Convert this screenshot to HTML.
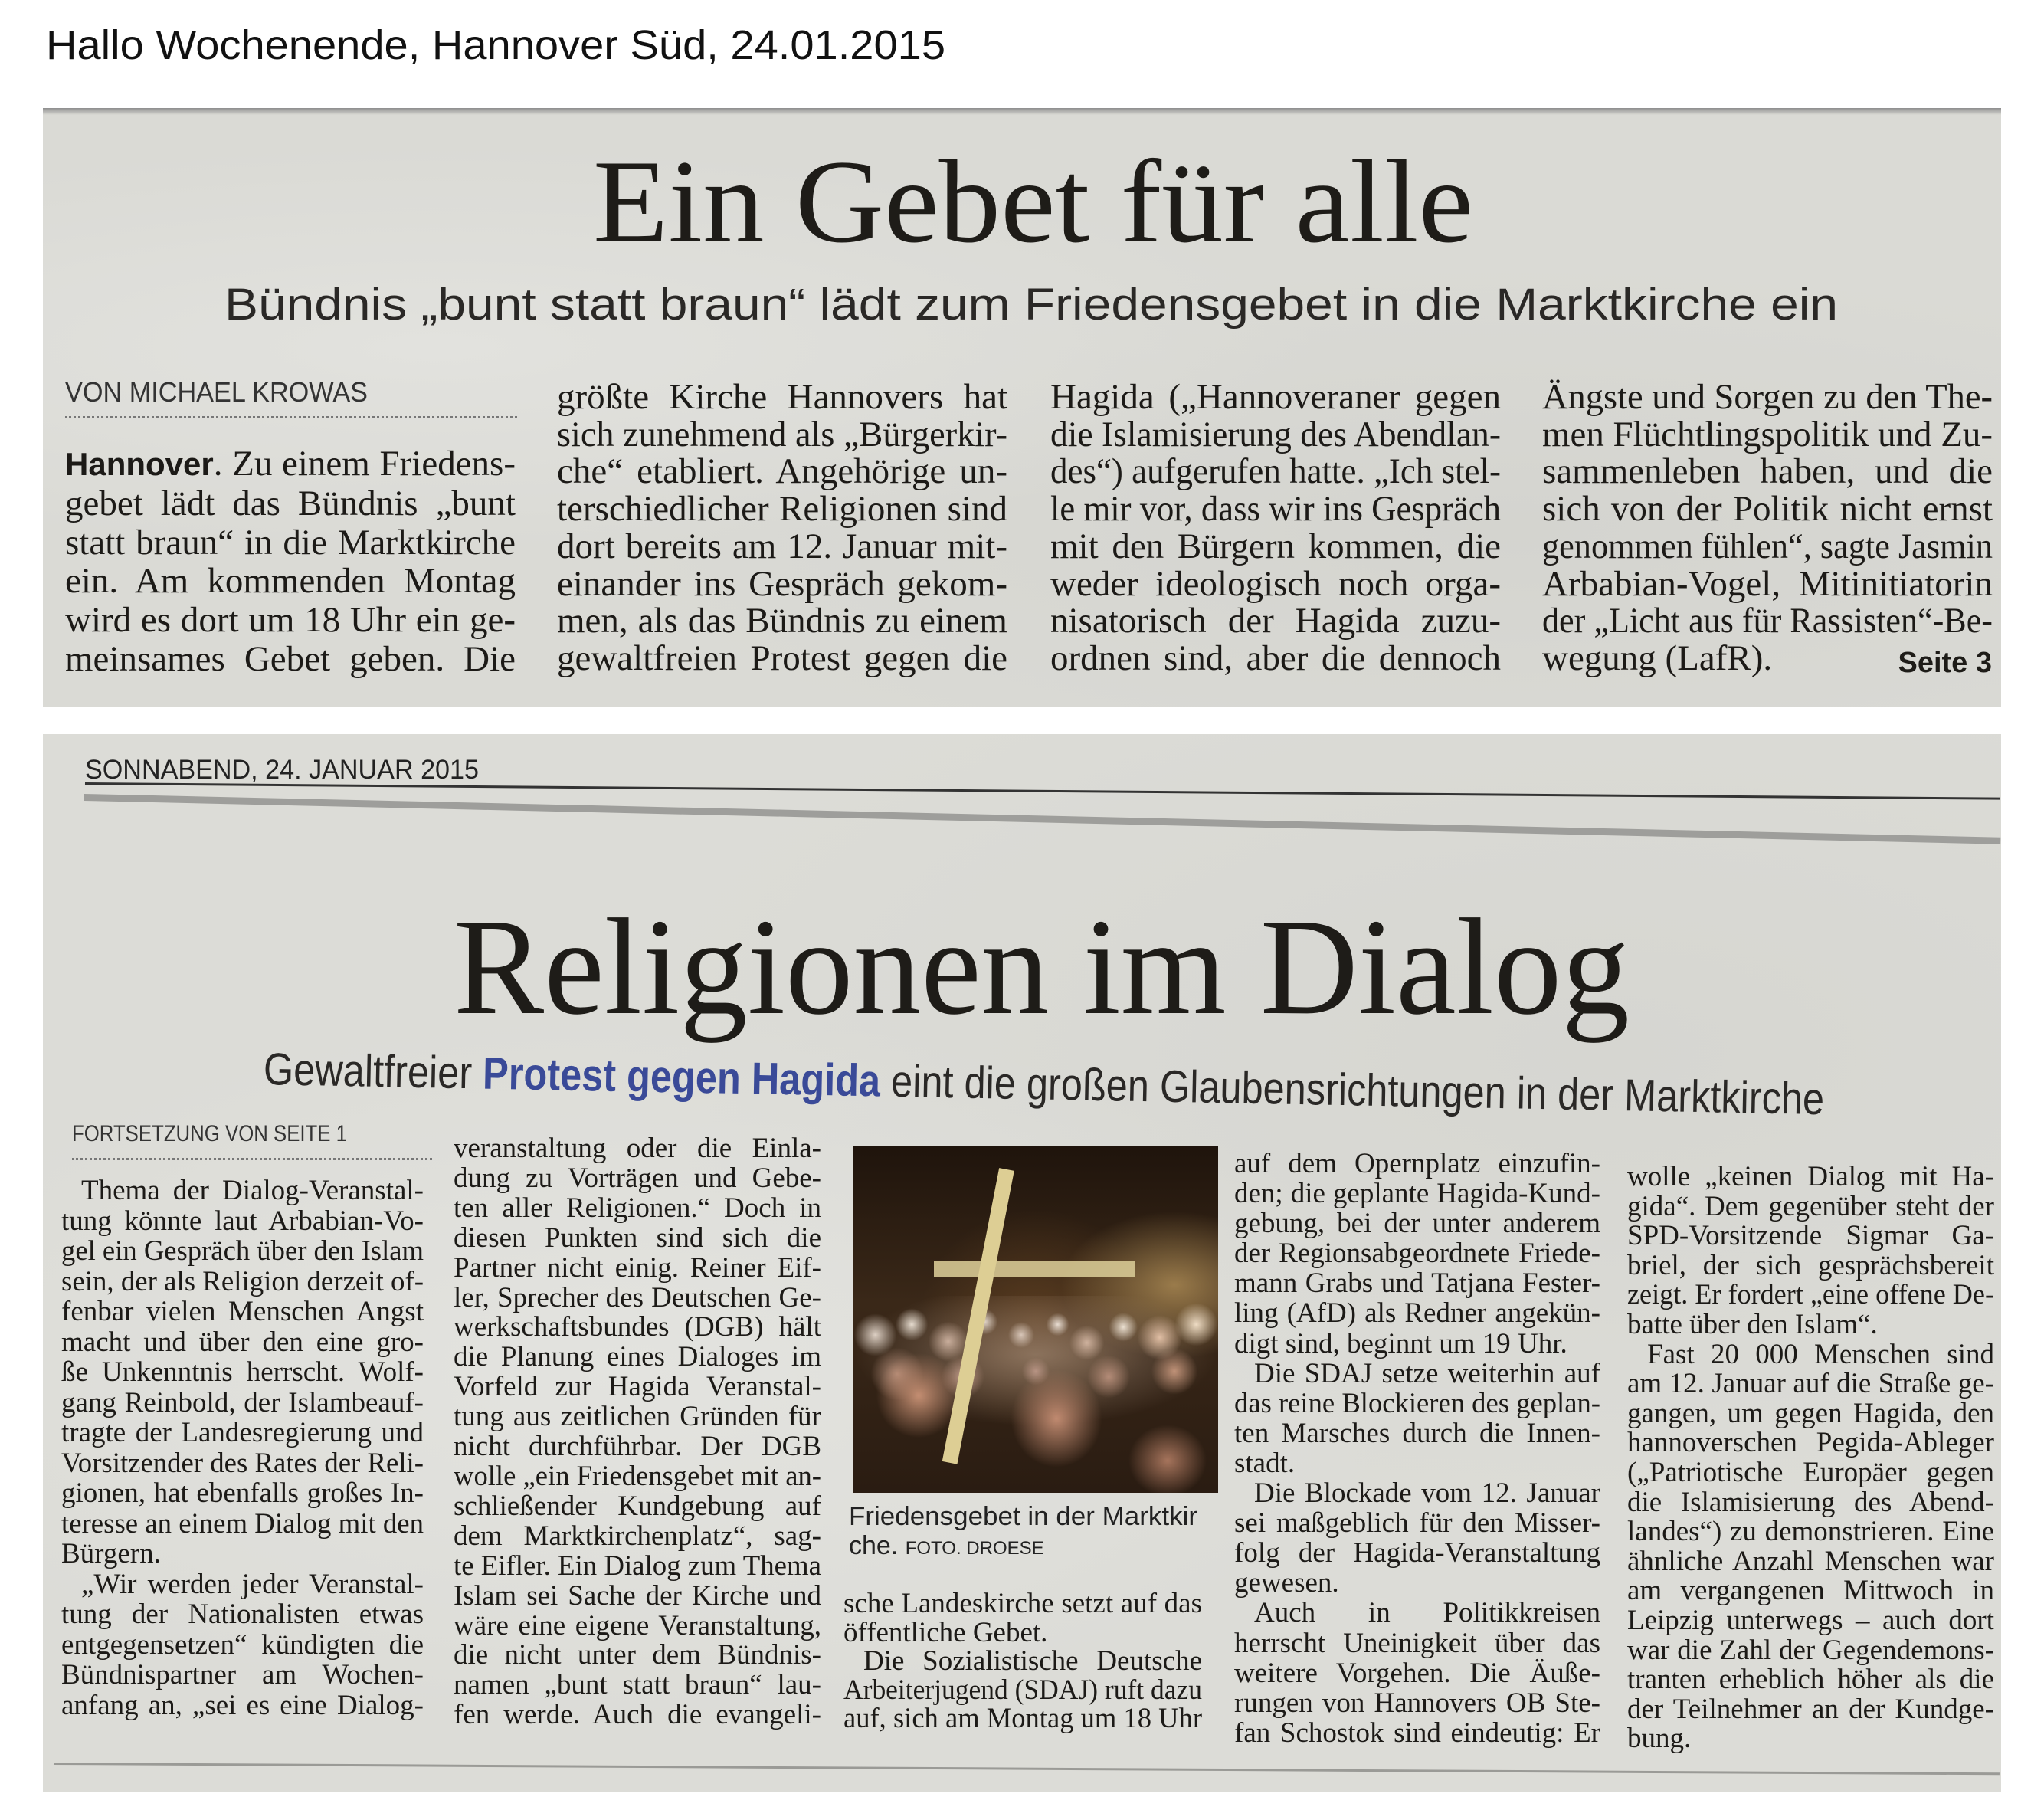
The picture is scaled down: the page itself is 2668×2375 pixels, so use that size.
<!DOCTYPE html>
<html><head><meta charset="utf-8">
<style>
html,body{margin:0;padding:0;background:#fff;}
body{width:2668px;height:2375px;position:relative;overflow:hidden;}
.a{position:absolute;}
.sans{font-family:"Liberation Sans",sans-serif;}
.serif{font-family:"Liberation Serif",serif;}
.fit{position:absolute;white-space:nowrap;}
.fit>span{display:inline-block;transform-origin:0 0;}
.c{position:absolute;font-family:"Liberation Serif",serif;color:#1c1a17;}
.c>div{white-space:nowrap;text-align:justify;text-align-last:justify;overflow:visible;transform-origin:0 0;}
.c>div.e{text-align-last:left;}
.c>div.i{text-indent:26px;}
.p1{font-size:47px;}
.p2{font-size:37px;}
</style></head><body>

<div class="fit sans" style="left:60px;top:32px;width:1174px;font-size:54px;line-height:54px;color:#111;"><span>Hallo Wochenende, Hannover Süd, 24.01.2015</span></div>

<!-- Panel 1 -->
<div class="a" style="left:56px;top:141px;width:2556px;height:781px;background:#dadad5;background-image:radial-gradient(ellipse at 20% 40%,#e2e2de 0,transparent 40%),radial-gradient(ellipse at 75% 70%,#d4d4cf 0,transparent 45%);"></div>
<div class="a" style="left:56px;top:141px;width:2556px;height:9px;background:linear-gradient(#8e8e8e,#dadad5);"></div>

<div class="fit serif" style="left:774px;top:186px;width:1149px;font-size:155px;line-height:155px;color:#1e1c18;"><span>Ein Gebet für alle</span></div>
<div class="fit sans" style="left:293px;top:369px;width:2106px;font-size:58px;line-height:58px;color:#2a2826;"><span>Bündnis „bunt statt braun“ lädt zum Friedensgebet in die Marktkirche ein</span></div>

<div class="fit sans" style="left:85px;top:494px;width:395px;font-size:36px;line-height:36px;color:#333;"><span>VON MICHAEL KROWAS</span></div>
<div class="a" style="left:85px;top:543px;width:590px;border-top:3px dotted #777;"></div>

<div class="c p1" style="left:85px;top:580px;width:588px;line-height:50.8px;">
<div><b class="sans" style="font-size:42px;">Hannover</b>. Zu einem Friedens-</div>
<div>gebet lädt das Bündnis „bunt</div>
<div>statt braun“ in die Marktkirche</div>
<div>ein. Am kommenden Montag</div>
<div>wird es dort um 18 Uhr ein ge-</div>
<div>meinsames Gebet geben. Die</div>
</div>
<div class="c p1" style="left:727px;top:494px;width:588px;line-height:48.7px;">
<div>größte Kirche Hannovers hat</div>
<div>sich zunehmend als „Bürgerkir-</div>
<div>che“ etabliert. Angehörige un-</div>
<div>terschiedlicher Religionen sind</div>
<div>dort bereits am 12. Januar mit-</div>
<div>einander ins Gespräch gekom-</div>
<div>men, als das Bündnis zu einem</div>
<div>gewaltfreien Protest gegen die</div>
</div>
<div class="c p1" style="left:1371px;top:494px;width:588px;line-height:48.7px;">
<div>Hagida („Hannoveraner gegen</div>
<div>die Islamisierung des Abendlan-</div>
<div>des“) aufgerufen hatte. „Ich stel-</div>
<div>le mir vor, dass wir ins Gespräch</div>
<div>mit den Bürgern kommen, die</div>
<div>weder ideologisch noch orga-</div>
<div>nisatorisch der Hagida zuzu-</div>
<div>ordnen sind, aber die dennoch</div>
</div>
<div class="c p1" style="left:2013px;top:494px;width:588px;line-height:48.7px;">
<div>Ängste und Sorgen zu den The-</div>
<div>men Flüchtlingspolitik und Zu-</div>
<div>sammenleben haben, und die</div>
<div>sich von der Politik nicht ernst</div>
<div>genommen fühlen“, sagte Jasmin</div>
<div>Arbabian-Vogel, Mitinitiatorin</div>
<div>der „Licht aus für Rassisten“-Be-</div>
<div class="e">wegung (LafR).</div>
</div>
<div class="a sans" style="left:2470px;top:845px;width:130px;text-align:right;font-size:38px;line-height:40px;font-weight:bold;color:#1e1c18;">Seite 3</div>

<!-- Panel 2 -->
<div class="a" style="left:56px;top:958px;width:2556px;height:1380px;background:#dcdcd7;background-image:radial-gradient(ellipse at 30% 60%,#e3e3df 0,transparent 40%),radial-gradient(ellipse at 80% 30%,#d6d6d1 0,transparent 45%);"></div>

<div class="fit sans" style="left:111px;top:987px;width:514px;font-size:35px;line-height:35px;color:#222;"><span>SONNABEND, 24. JANUAR 2015</span></div>
<div class="a" style="left:111px;top:1021px;width:2500px;height:3px;background:#333;transform:rotate(0.45deg);transform-origin:0 0;"></div>
<div class="a" style="left:110px;top:1036px;width:2502px;height:9px;background:#8f8f8c;opacity:.8;transform:rotate(1.3deg);transform-origin:0 0;"></div>

<div class="fit serif" style="left:592px;top:1172px;width:1535px;font-size:180px;line-height:180px;color:#1e1c18;"><span>Religionen im Dialog</span></div>
<div class="fit sans" style="left:344px;top:1366px;width:2038px;font-size:59px;line-height:59px;color:#2a2826;transform:rotate(1.1deg);transform-origin:0 50%;"><span>Gewaltfreier <b style="color:#3a4a98;">Protest gegen Hagida</b> eint die großen Glaubensrichtungen in der Marktkirche</span></div>

<div class="fit sans" style="left:94px;top:1465px;width:359px;font-size:30px;line-height:30px;color:#333;"><span>FORTSETZUNG VON SEITE 1</span></div>
<div class="a" style="left:94px;top:1511px;width:470px;border-top:3px dotted #777;"></div>

<div class="c p2" style="left:80px;top:1534px;width:473px;line-height:39.5px;">
<div class="i">Thema der Dialog-Veranstal-</div>
<div>tung könnte laut Arbabian-Vo-</div>
<div>gel ein Gespräch über den Islam</div>
<div>sein, der als Religion derzeit of-</div>
<div>fenbar vielen Menschen Angst</div>
<div>macht und über den eine gro-</div>
<div>ße Unkenntnis herrscht. Wolf-</div>
<div>gang Reinbold, der Islambeauf-</div>
<div>tragte der Landesregierung und</div>
<div>Vorsitzender des Rates der Reli-</div>
<div>gionen, hat ebenfalls großes In-</div>
<div>teresse an einem Dialog mit den</div>
<div class="e">Bürgern.</div>
<div class="i">„Wir werden jeder Veranstal-</div>
<div>tung der Nationalisten etwas</div>
<div>entgegensetzen“ kündigten die</div>
<div>Bündnispartner am Wochen-</div>
<div>anfang an, „sei es eine Dialog-</div>
</div>
<div class="c p2" style="left:592px;top:1480px;width:480px;line-height:38.9px;">
<div>veranstaltung oder die Einla-</div>
<div>dung zu Vorträgen und Gebe-</div>
<div>ten aller Religionen.“ Doch in</div>
<div>diesen Punkten sind sich die</div>
<div>Partner nicht einig. Reiner Eif-</div>
<div>ler, Sprecher des Deutschen Ge-</div>
<div>werkschaftsbundes (DGB) hält</div>
<div>die Planung eines Dialoges im</div>
<div>Vorfeld zur Hagida Veranstal-</div>
<div>tung aus zeitlichen Gründen für</div>
<div>nicht durchführbar. Der DGB</div>
<div>wolle „ein Friedensgebet mit an-</div>
<div>schließender Kundgebung auf</div>
<div>dem Marktkirchenplatz“, sag-</div>
<div>te Eifler. Ein Dialog zum Thema</div>
<div>Islam sei Sache der Kirche und</div>
<div>wäre eine eigene Veranstaltung,</div>
<div>die nicht unter dem Bündnis-</div>
<div>namen „bunt statt braun“ lau-</div>
<div>fen werde. Auch die evangeli-</div>
</div>

<!-- photo -->
<div class="a" style="left:1114px;top:1496px;width:476px;height:452px;background:#2a1d13;overflow:hidden;">
  <div class="a" style="left:0;top:0;width:476px;height:452px;background:
    radial-gradient(ellipse at 88% 40%,rgba(220,180,110,.6) 0,transparent 25%),
    radial-gradient(ellipse at 50% 50%,rgba(120,80,40,.5) 0,transparent 45%),
    linear-gradient(#1f140c 0,#3a2818 45%,#2a1c12 100%);"></div>
  <div class="a" style="left:0;top:195px;width:476px;height:170px;background:
    radial-gradient(circle at 6% 30%,#ddd0c4 0,transparent 6%),
    radial-gradient(circle at 16% 22%,#e6dccf 0,transparent 5%),
    radial-gradient(circle at 26% 35%,#c9ae9c 0,transparent 7%),
    radial-gradient(circle at 36% 20%,#e2d6ca 0,transparent 5%),
    radial-gradient(circle at 46% 30%,#d8c6b8 0,transparent 6%),
    radial-gradient(circle at 56% 22%,#e8ddd2 0,transparent 5%),
    radial-gradient(circle at 64% 36%,#cfb29e 0,transparent 7%),
    radial-gradient(circle at 74% 24%,#eadfd0 0,transparent 5%),
    radial-gradient(circle at 84% 32%,#e0bea4 0,transparent 7%),
    radial-gradient(circle at 94% 22%,#eedcc4 0,transparent 6%),
    radial-gradient(circle at 12% 60%,#b08a76 0,transparent 8%),
    radial-gradient(circle at 30% 62%,#c09a88 0,transparent 8%),
    radial-gradient(circle at 50% 58%,#b89484 0,transparent 7%),
    radial-gradient(circle at 70% 62%,#b48c78 0,transparent 8%),
    radial-gradient(circle at 88% 58%,#c09278 0,transparent 7%),
    radial-gradient(ellipse at 50% 45%,rgba(190,165,145,.55) 0,transparent 70%);"></div>
  <div class="a" style="left:20px;top:260px;width:130px;height:130px;background:radial-gradient(ellipse,#c48e72 0,transparent 60%);"></div>
  <div class="a" style="left:195px;top:280px;width:140px;height:150px;background:radial-gradient(ellipse,#c08a70 0,transparent 60%);"></div>
  <div class="a" style="left:350px;top:355px;width:120px;height:110px;background:radial-gradient(ellipse,#a6745c 0,transparent 60%);"></div>
  <div class="a" style="left:105px;top:149px;width:262px;height:22px;background:#d6c894;opacity:.9;"></div>
  <div class="a" style="left:190px;top:30px;width:20px;height:390px;background:#ddce94;transform:rotate(11deg);transform-origin:50% 0;"></div>
</div>
<div class="fit sans" style="left:1108px;top:1962px;width:455px;font-size:34px;line-height:34px;color:#222;"><span>Friedensgebet in der Marktkir</span></div>
<div class="a sans" style="left:1108px;top:2000px;font-size:34px;line-height:34px;color:#222;white-space:nowrap;">che. <span style="font-size:24px;">FOTO. DROESE</span></div>

<div class="c p2" style="left:1101px;top:2074px;width:468px;line-height:37.5px;">
<div>sche Landeskirche setzt auf das</div>
<div class="e">öffentliche Gebet.</div>
<div class="i">Die Sozialistische Deutsche</div>
<div>Arbeiterjugend (SDAJ) ruft dazu</div>
<div>auf, sich am Montag um 18 Uhr</div>
</div>
<div class="c p2" style="left:1611px;top:1499px;width:478px;line-height:39.1px;">
<div>auf dem Opernplatz einzufin-</div>
<div>den; die geplante Hagida-Kund-</div>
<div>gebung, bei der unter anderem</div>
<div>der Regionsabgeordnete Friede-</div>
<div>mann Grabs und Tatjana Fester-</div>
<div>ling (AfD) als Redner angekün-</div>
<div class="e">digt sind, beginnt um 19 Uhr.</div>
<div class="i">Die SDAJ setze weiterhin auf</div>
<div>das reine Blockieren des geplan-</div>
<div>ten Marsches durch die Innen-</div>
<div class="e">stadt.</div>
<div class="i">Die Blockade vom 12. Januar</div>
<div>sei maßgeblich für den Misser-</div>
<div>folg der Hagida-Veranstaltung</div>
<div class="e">gewesen.</div>
<div class="i">Auch in Politikkreisen</div>
<div>herrscht Uneinigkeit über das</div>
<div>weitere Vorgehen. Die Äuße-</div>
<div>rungen von Hannovers OB Ste-</div>
<div>fan Schostok sind eindeutig: Er</div>
</div>
<div class="c p2" style="left:2124px;top:1517px;width:479px;line-height:38.6px;">
<div>wolle „keinen Dialog mit Ha-</div>
<div>gida“. Dem gegenüber steht der</div>
<div>SPD-Vorsitzende Sigmar Ga-</div>
<div>briel, der sich gesprächsbereit</div>
<div>zeigt. Er fordert „eine offene De-</div>
<div class="e">batte über den Islam“.</div>
<div class="i">Fast 20 000 Menschen sind</div>
<div>am 12. Januar auf die Straße ge-</div>
<div>gangen, um gegen Hagida, den</div>
<div>hannoverschen Pegida-Ableger</div>
<div>(„Patriotische Europäer gegen</div>
<div>die Islamisierung des Abend-</div>
<div>landes“) zu demonstrieren. Eine</div>
<div>ähnliche Anzahl Menschen war</div>
<div>am vergangenen Mittwoch in</div>
<div>Leipzig unterwegs – auch dort</div>
<div>war die Zahl der Gegendemons-</div>
<div>tranten erheblich höher als die</div>
<div>der Teilnehmer an der Kundge-</div>
<div class="e">bung.</div>
</div>
<div class="a" style="left:70px;top:2300px;width:2540px;height:3px;background:#9a9a96;transform:rotate(0.3deg);transform-origin:0 0;"></div>

<script>
document.querySelectorAll('.fit').forEach(function(f){
  var s=f.firstElementChild;var T=parseFloat(f.style.width);var w=s.getBoundingClientRect().width;
  if(w>0)s.style.transform='scaleX('+(T/w)+')';
});
document.querySelectorAll('.c>div').forEach(function(d){
  var W=d.parentNode.clientWidth;
  d.style.display='inline-block';d.style.width='auto';
  var w=d.getBoundingClientRect().width;
  d.style.display='block';
  if(w>W){d.style.width=w+'px';d.style.transform='scaleX('+(W/w)+')';}
  else{d.style.width=W+'px';}
});
</script>
</body></html>
